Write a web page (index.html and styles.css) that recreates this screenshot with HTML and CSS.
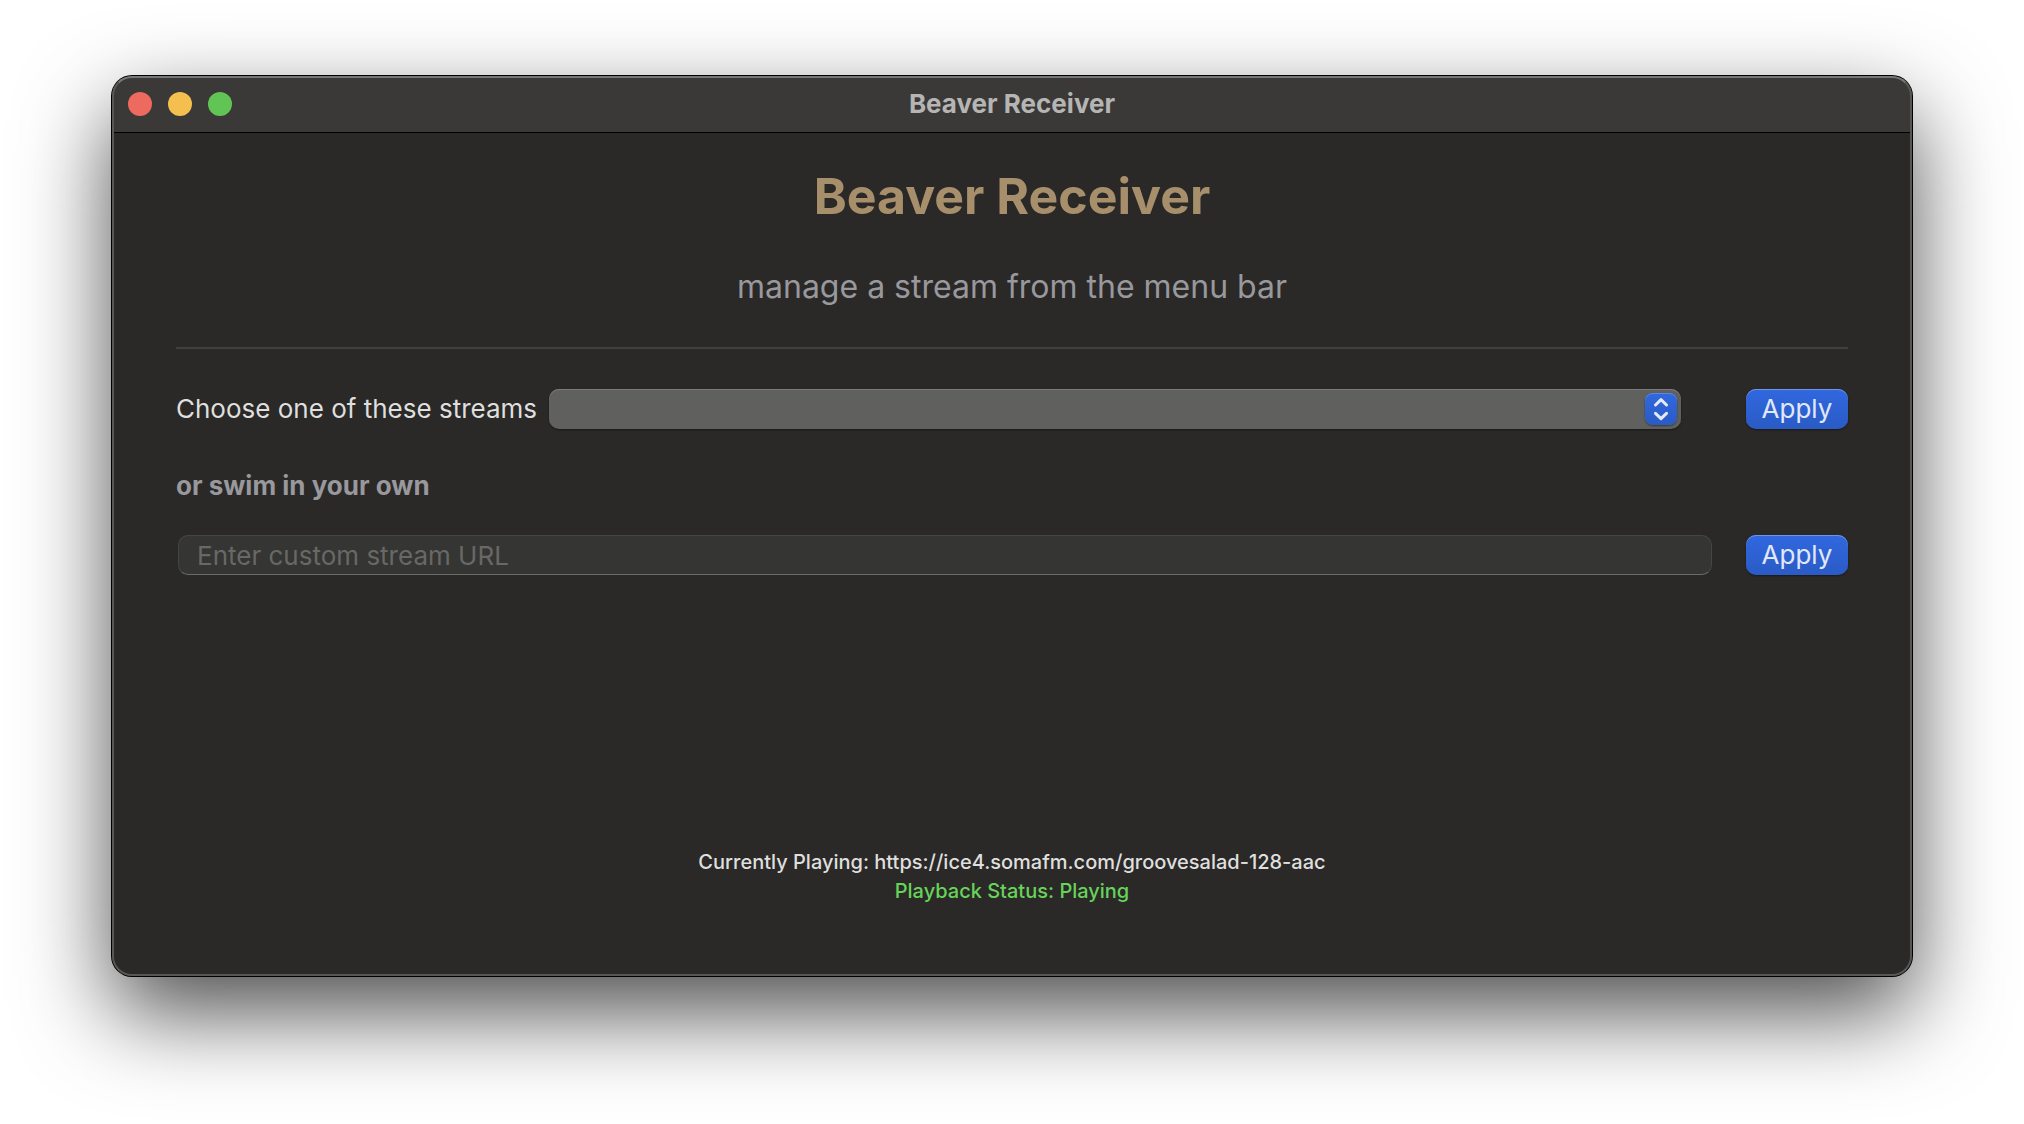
FILE: index.html
```html
<!DOCTYPE html>
<html lang="en">
<head>
<meta charset="utf-8">
<meta name="viewport" content="width=device-width, initial-scale=1">
<title>Beaver Receiver</title>
<link rel="stylesheet" href="styles.css">
</head>
<body>
<div class="window">
  <header class="titlebar">
    <div class="lights">
      <button class="light light-close" type="button" aria-label="Close"></button>
      <button class="light light-minimize" type="button" aria-label="Minimize"></button>
      <button class="light light-zoom" type="button" aria-label="Zoom"></button>
    </div>
    <div class="titlebar-text">Beaver Receiver</div>
  </header>
  <main class="content">
    <h1 class="heading">Beaver Receiver</h1>
    <p class="tagline">manage a stream from the menu bar</p>
    <hr class="divider">
    <form class="row row-preset">
      <div class="field">
        <label class="label" for="stream">Choose one of these streams</label>
        <div class="picker">
          <select class="picker-select" id="stream"><option value=""></option></select>
          <span class="picker-badge">
            <svg width="32" height="32" viewBox="0 0 32 32" fill="none" stroke="currentColor" stroke-width="3" stroke-linecap="round" stroke-linejoin="round" aria-hidden="true"><path d="M10.500 12 16 6.700 21.500 12M10.500 20.300 16 25.600 21.500 20.300"/></svg>
          </span>
        </div>
      </div>
      <button class="apply" type="button">Apply</button>
    </form>
    <label class="label-alt" for="url">or swim in your own</label>
    <form class="row row-custom">
      <input class="url" id="url" type="text" placeholder="Enter custom stream URL">
      <button class="apply" type="button">Apply</button>
    </form>
    <footer class="status">
      <p class="status-line">Currently Playing: https://ice4.somafm.com/groovesalad-128-aac</p>
      <p class="status-line status-playing">Playback Status: Playing</p>
    </footer>
  </main>
</div>
</body>
</html>
```
FILE: styles.css
```css
* {
  box-sizing: border-box;
}

body {
  margin: 0;
  padding: 76px 112px 148px;
  min-height: 100vh;
  display: flex;
  background: #fff;
  color: #dfdfde;
  font-family: Inter, "Liberation Sans", sans-serif;
  font-size: 26px;
}

h1,
p {
  margin: 0;
}

button,
input,
select {
  font: inherit;
}

.window {
  flex: 1;
  display: flex;
  flex-direction: column;
  position: relative;
  border-radius: 20px;
  background: #2a2927;
  box-shadow: 0 0 0 1px #000, 0 36px 90px rgba(0, 0, 0, 0.7);
}

/* Light rim drawn over the title bar and the content */
.window::after {
  content: "";
  position: absolute;
  inset: 0;
  border: 2px solid #575756;
  border-top-color: #777775;
  border-radius: 20px;
  pointer-events: none;
}

.titlebar {
  display: grid;
  grid-template-columns: 1fr auto 1fr;
  align-items: center;
  height: 57px;
  padding: 0 16px;
  border-bottom: 1px solid #000;
  border-radius: 20px 20px 0 0;
  background: #3a3937;
}

.lights {
  display: flex;
  gap: 16px;
}

.light {
  width: 24px;
  height: 24px;
  padding: 0;
  border: 0;
  border-radius: 50%;
}

.light-close {
  background: #ed6a5f;
}

.light-minimize {
  background: #f5bf4f;
}

.light-zoom {
  background: #61c555;
}

.titlebar-text {
  padding-bottom: 2px;
  color: #b5b5b4;
  font-weight: 700;
}

.content {
  flex: 1;
  display: flex;
  flex-direction: column;
  padding: 31px 64px 70px;
}

.heading {
  color: #a88f6c;
  font-size: 50px;
  line-height: 64px;
  text-align: center;
}

.tagline {
  margin-top: 39px;
  color: #98989d;
  font-size: 32px;
  line-height: 40px;
  text-align: center;
}

.divider {
  width: 100%;
  height: 2px;
  margin: 40px 0;
  border: 0;
  background: #403f3d;
}

.row {
  display: flex;
  align-items: center;
}

.row-preset {
  gap: 65px;
}

.field {
  flex: 1;
  display: flex;
  align-items: center;
  gap: 12px;
}

.label {
  line-height: 40px;
}

.picker {
  flex: 1;
  position: relative;
}

.picker-select {
  display: block;
  width: 100%;
  height: 40px;
  padding: 0 44px 0 16px;
  appearance: none;
  border: 0;
  border-radius: 10px;
  background: #60605e;
  box-shadow: inset 0 1px #7d7d7b, 0 1px 2px rgba(0, 0, 0, 0.4);
  color: inherit;
}

.picker-badge {
  position: absolute;
  top: 4px;
  right: 4px;
  width: 32px;
  height: 32px;
  border-radius: 8px;
  background: linear-gradient(#3168e0, #2a5bc5);
  box-shadow: inset 0 1px #5b88e6, 0 1px 2px rgba(0, 0, 0, 0.4);
  color: #e4eaf9;
  pointer-events: none;
}

.picker-badge svg {
  display: block;
}

.apply {
  width: 102px;
  height: 40px;
  padding: 0 0 2px;
  border: 0;
  border-radius: 10px;
  background: linear-gradient(#3168e0, #2a5bc5);
  box-shadow: inset 0 1px #6e95e8, 0 1px 2px rgba(0, 0, 0, 0.4);
  color: #e0e8f9;
  text-align: center;
}

.label-alt {
  margin: 41px 0 33px;
  color: #98989d;
  font-weight: 700;
  line-height: 32px;
}

.row-custom {
  gap: 34px;
  padding-left: 2px;
}

.url {
  flex: 1;
  min-width: 0;
  height: 40px;
  padding: 1px 18px 0;
  border: 1px solid #454543;
  border-bottom-color: #6b6b69;
  border-radius: 10px;
  background: #353533;
  color: #dfdfde;
}

.url::placeholder {
  color: #686866;
  opacity: 1;
}

.status {
  margin-top: auto;
  font-size: 20px;
  font-weight: 500;
  line-height: 29px;
  text-align: center;
}

.status-playing {
  color: #67d35a;
}
```
